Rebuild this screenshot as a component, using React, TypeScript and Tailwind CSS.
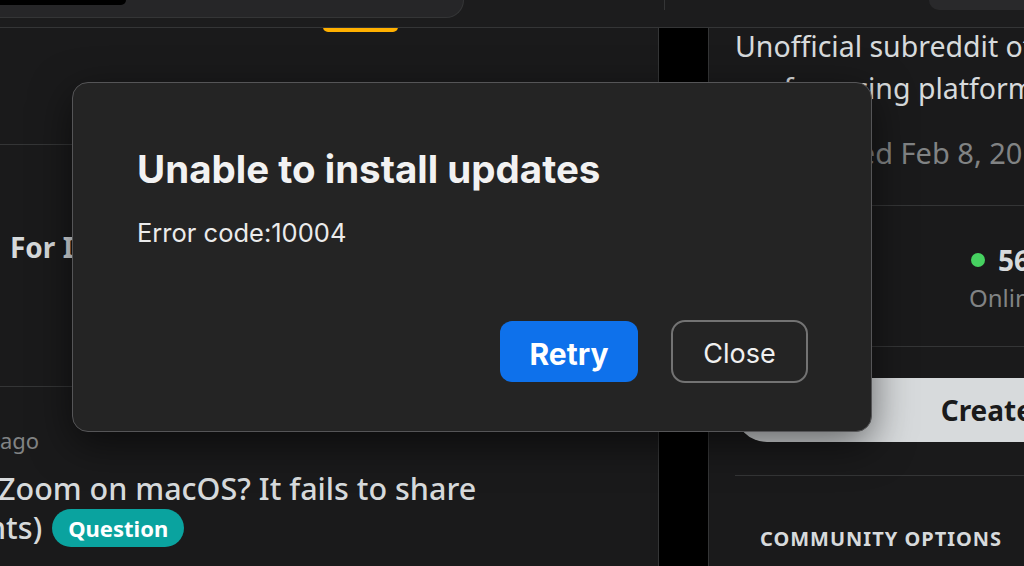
import React from "react";

export default function App() {
  return (
    <div className="relative w-[1024px] h-[566px] overflow-hidden bg-[#1a1a1b] flex flex-col font-['Noto_Sans',sans-serif] text-[#d7dadc]">
      {/* Header */}
      <div className="h-[28px] shrink-0 bg-[#1c1c1d] border-b border-[#343536] flex items-start">
        <div className="w-[464px] h-[18px] bg-[#262628] border-b border-r border-[#343536] rounded-br-[20px]">
          <div className="w-[126px] h-[5px] bg-black rounded-br-[10px]" />
        </div>
        <div className="ml-[200px] w-px h-[10px] bg-[#343536]" />
        <div className="ml-auto w-[95px] h-[10px] bg-[#29292b] rounded-bl-[14px]" />
      </div>

      {/* Main */}
      <div className="flex flex-1 min-h-0">
        {/* Feed */}
        <div className="relative w-[659px] shrink-0 border-r border-[#343536] overflow-hidden">
          <div className="absolute left-[323px] top-[-6px] w-[75px] h-[10px] rounded-full bg-[#ffb000]" />
          <div className="h-[117px] border-b border-[#343536]" />
          <div className="h-[242px] border-b border-[#343536] pt-[84px] pl-[10px]">
            <div className="text-[28px] leading-[36px] font-bold whitespace-nowrap text-[#d7dadc]">For Intel Macs</div>
          </div>
          <div className="pt-[38px]">
            <div className="text-[22px] leading-[30px] text-[#818384] whitespace-nowrap">ago</div>
            <div className="mt-[14px] text-[30.5px] leading-[39px] font-medium whitespace-nowrap ml-[-2px] text-[#d7dadc]">
              Zoom on macOS? It fails to share
            </div>
            <div className="flex items-center gap-[10px] whitespace-nowrap ml-[-13px]">
              <span className="text-[30.5px] leading-[39px] font-medium text-[#d7dadc]">nts)</span>
              <span className="h-[38px] px-[16px] rounded-full bg-[#0aa39f] text-white text-[22px] font-bold leading-[38px]">Question</span>
            </div>
          </div>
        </div>

        {/* Gutter */}
        <div className="w-[49px] shrink-0 bg-black" />

        {/* Sidebar */}
        <div className="flex-1 border-l border-[#343536] pl-[26px] overflow-hidden">
          <div className="mt-[-3px] text-[28.5px] leading-[42px] whitespace-nowrap text-[#d7dadc]">
            <div>Unofficial subreddit of the Zoom video</div>
            <div>conferencing platform</div>
          </div>
          <div className="mt-[23px] flex items-center gap-[15px] text-[29px] leading-[42px] whitespace-nowrap text-[#818384]">
            <svg width="36" height="36" viewBox="0 0 20 20" fill="currentColor" className="shrink-0"><path d="M3 10h14v7H3z M9 4h2v5H9z M10 1c1 1.2 1.2 2 0 3-1.2-1-1-1.8 0-3z" /></svg>
            <span>Created Feb 8, 2012</span>
          </div>
          <div className="mt-[31px] border-t border-[#343536] w-[600px]" />
          <div className="flex pt-[36px] pb-[33px] whitespace-nowrap">
            <div className="w-[234px] shrink-0 flex flex-col">
              <div className="text-[28px] leading-[36px] font-bold text-[#d7dadc]">25.4k</div>
              <div className="mt-[5px] text-[24px] leading-[30px] text-[#818384]">Members</div>
            </div>
            <div className="shrink-0 flex flex-col">
              <div className="flex items-center text-[28px] leading-[36px] font-bold text-[#d7dadc]">
                <span className="ml-[2px] w-[14px] h-[14px] rounded-full bg-[#46d160] mr-[13px]" />
                56
              </div>
              <div className="mt-[5px] text-[24px] leading-[30px] text-[#818384]">Online</div>
            </div>
          </div>
          <div className="border-t border-[#343536] w-[600px]" />
          <div className="mt-[31px] w-[572px] h-[64px] rounded-full bg-[#d7dadc] flex items-center justify-center text-[28px] font-bold text-[#1a1a1b] whitespace-nowrap">
            Create Post
          </div>
          <div className="mt-[33px] border-t border-[#343536] w-[600px]" />
          <div className="mt-[49px] pl-[25px] text-[20px] leading-[28px] font-bold tracking-[1px] text-[#d7dadc] whitespace-nowrap">
            COMMUNITY OPTIONS
          </div>
        </div>
      </div>

      {/* Dialog */}
      <div className="absolute left-[72px] top-[82px] w-[800px] h-[350px] bg-[#242424] border border-[#555557] rounded-[16px] shadow-[0_12px_40px_rgba(0,0,0,0.55)] flex flex-col font-['Inter',sans-serif]">
        <div className="pl-[64px] pt-[63px]">
          <div className="text-[38.5px] leading-[46px] font-bold text-[#f2f2f2] whitespace-nowrap">Unable to install updates</div>
          <div className="mt-[26px] text-[25.5px] leading-[30px] text-[#ebebeb] whitespace-nowrap">Error code:10004</div>
        </div>
        <div className="mt-auto flex items-center justify-end gap-[33px] pr-[63px] pb-[48px]">
          <button className="w-[138px] h-[61px] pt-[4px] rounded-[12px] bg-[#0e71eb] text-white text-[30px] leading-[36px] font-bold">Retry</button>
          <button className="w-[137px] h-[63px] pt-[4px] rounded-[14px] border-2 border-[#737373] text-[#f0f0f0] text-[27px] leading-[36px]">Close</button>
        </div>
      </div>
    </div>
  );
}
